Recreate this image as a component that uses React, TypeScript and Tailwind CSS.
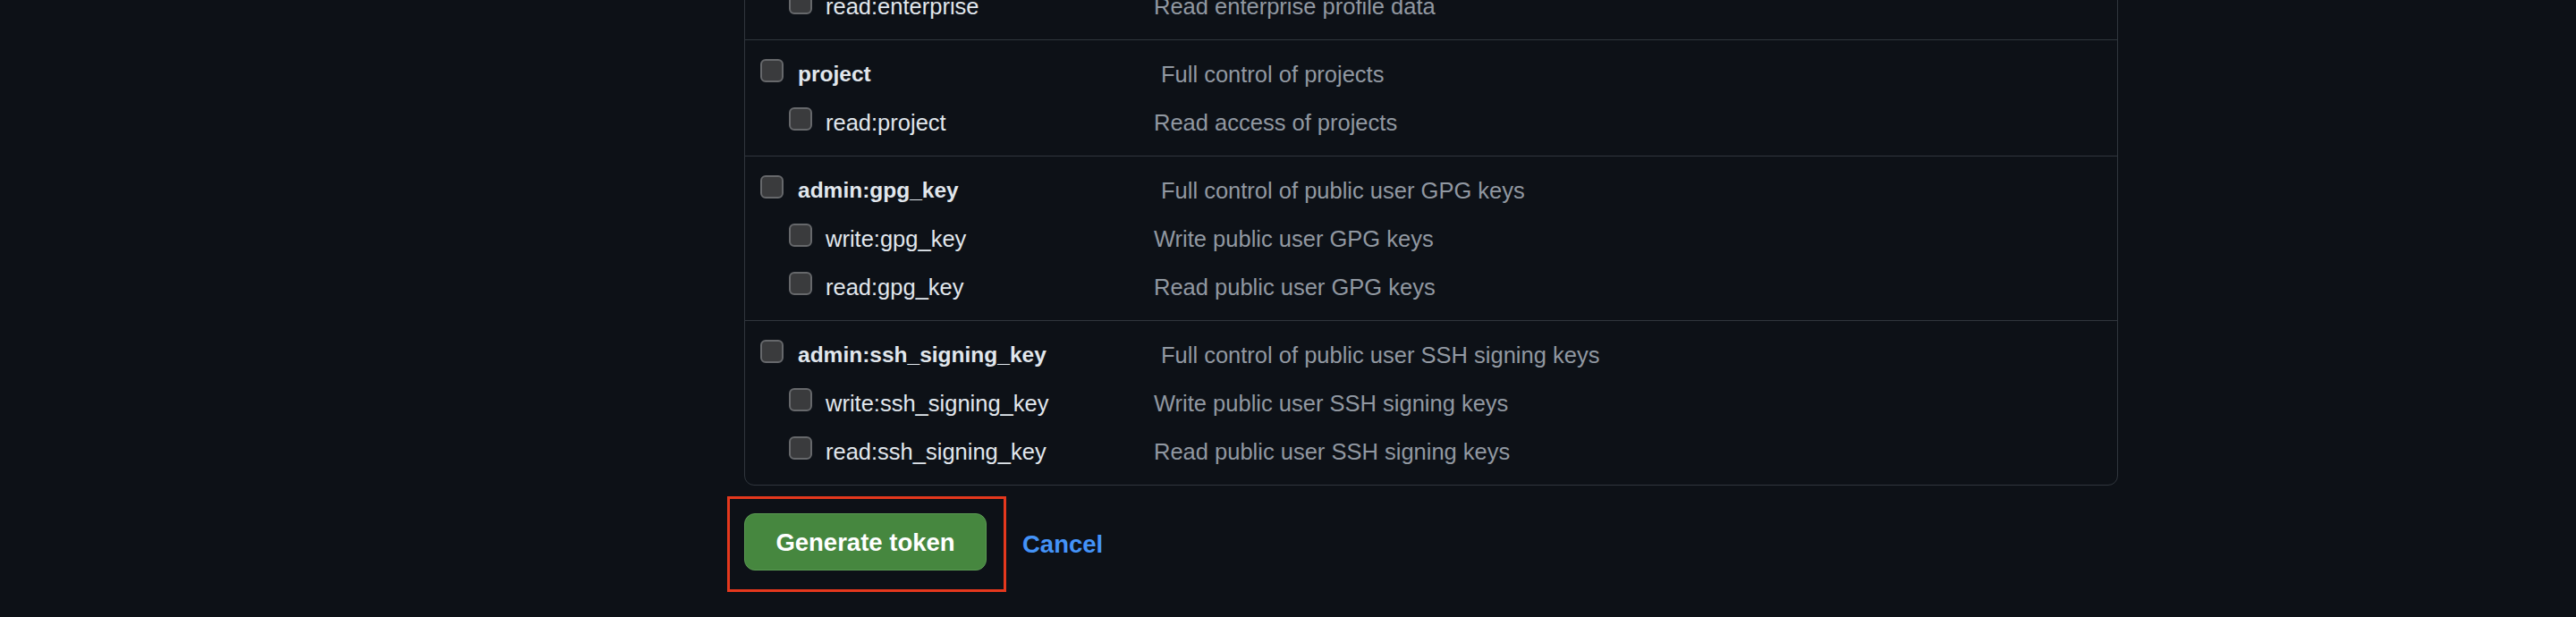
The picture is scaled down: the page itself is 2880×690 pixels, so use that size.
import React from "react";

type Item = { name: string; desc: string };
type Scope = { parent?: Item; children: Item[] };

// the list is scrolled: only the tail of the enterprise group shows at the top
const groups: Scope[] = [
  {
    children: [{ name: "read:enterprise", desc: "Read enterprise profile data" }],
  },
  {
    parent: { name: "project", desc: "Full control of projects" },
    children: [{ name: "read:project", desc: "Read access of projects" }],
  },
  {
    parent: { name: "admin:gpg_key", desc: "Full control of public user GPG keys" },
    children: [
      { name: "write:gpg_key", desc: "Write public user GPG keys" },
      { name: "read:gpg_key", desc: "Read public user GPG keys" },
    ],
  },
  {
    parent: { name: "admin:ssh_signing_key", desc: "Full control of public user SSH signing keys" },
    children: [
      { name: "write:ssh_signing_key", desc: "Write public user SSH signing keys" },
      { name: "read:ssh_signing_key", desc: "Read public user SSH signing keys" },
    ],
  },
];

function Checkbox() {
  return (
    <span className="mb-[8px] block h-[26px] w-[26px] shrink-0 rounded-[6px] border-2 border-[#66686b] bg-[#3a3b3d]" />
  );
}

function ParentRow({ name, desc }: Item) {
  return (
    <div className="flex h-[54px] items-center pl-[17px]">
      <div className="flex w-[448px] shrink-0 items-center">
        <Checkbox />
        <span className="ml-[16px] text-[24.5px] font-bold text-[#e1e7ed]">{name}</span>
      </div>
      <span className="text-[25.5px] text-[#9198a1]">{desc}</span>
    </div>
  );
}

function ChildRow({ name, desc }: Item) {
  return (
    <div className="flex h-[54px] items-center pl-[49px]">
      <div className="flex w-[408px] shrink-0 items-center">
        <Checkbox />
        <span className="ml-[15px] text-[25.5px] text-[#e1e7ed]">{name}</span>
      </div>
      <span className="text-[25.5px] text-[#9198a1]">{desc}</span>
    </div>
  );
}

export default function App() {
  return (
    <div
      className="h-[690px] w-full overflow-hidden bg-[#0d1117]"
      style={{ fontFamily: '"Liberation Sans", Arial, sans-serif' }}
    >
      <div className="ml-[832px] mt-[-32px] w-[1536px]">
        <div className="rounded-[11px] border border-[#30363d]">
          {groups.map((g, i) => (
            <div
              key={i}
              className={i === 0 ? "pb-[10px] pt-[11px]" : "border-t border-[#30363d] pb-[10px] pt-[11px]"}
            >
              {g.parent && <ParentRow name={g.parent.name} desc={g.parent.desc} />}
              {g.children.map((c) => (
                <ChildRow key={c.name} name={c.name} desc={c.desc} />
              ))}
            </div>
          ))}
        </div>

        <div className="-ml-[19px] mt-[12px] flex items-center">
          <div className="border-[3px] border-[#e5381d] pb-[21px] pl-[16px] pr-[19px] pt-[16px]">
            <button className="flex h-[64px] w-[271px] items-center justify-center rounded-[12px] border border-[#5b9a53] bg-[#46873f] pt-[2px] text-[27.5px] font-bold text-white">
              Generate token
            </button>
          </div>
          <a className="ml-[18px] text-[27.5px] font-bold text-[#4493f8]">Cancel</a>
        </div>
      </div>
    </div>
  );
}
